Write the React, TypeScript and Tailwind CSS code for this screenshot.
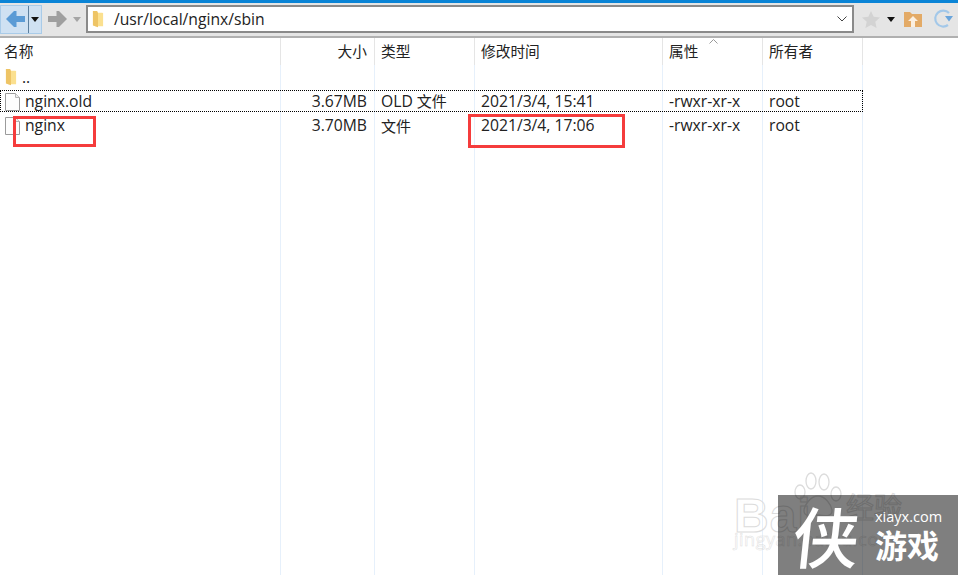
import React from "react";

const font = { fontFamily: '"Open Sans", "Noto Sans CJK SC", sans-serif' };

const tpl = "grid grid-cols-[281px_94px_100px_188px_100px_100px] w-[863px]";

function Folder({ className }: { className?: string }) {
  return (
    <svg viewBox="0 0 14 20" className={className}>
      <path d="M4 2h8a1 1 0 0 1 1 1v15H4z" fill="#fbe08f" />
      <path d="M1 0h5l1 2v17l-6-2z" fill="#eec465" />
    </svg>
  );
}

function FileIcon({ className }: { className?: string }) {
  return (
    <svg viewBox="0 0 15 18" className={className}>
      <path d="M.5.5h10l4 4v13H.5z" fill="#fdfdfd" stroke="#9b9b9b" />
      <path d="M10.5.5v4h4" fill="#eee" stroke="#b5b5b5" />
    </svg>
  );
}

function Arrow({ color, flip }: { color: string; flip?: boolean }) {
  return (
    <svg viewBox="0 0 19 16" className={`w-[19px] h-4 ${flip ? "-scale-x-100" : ""}`}>
      <path d="M0 8 8 0h2.500v5H19v6h-8.500v5H8z" fill={color} />
    </svg>
  );
}

function Caret({ color }: { color: string }) {
  return (
    <svg viewBox="0 0 8 5" className="w-2 h-[5px]">
      <path d="M0 0h8L4 5z" fill={color} />
    </svg>
  );
}

const lineH = "border-r border-[#e5e5e5]";
const lineB = "border-r border-[#e6f0fb]";

function Row({
  cells,
  icon,
  selected,
  className,
}: {
  cells: React.ReactNode[];
  icon?: React.ReactNode;
  selected?: boolean;
  className?: string;
}) {
  const c = `${lineB} flex items-center`;
  return (
    <div className={`${tpl} ${className ?? ""} relative text-[15.700px] text-[#222]`}>
      <div className={`${c} pl-[5px] gap-[5px]`}>
        {icon}
        <span>{cells[0]}</span>
      </div>
      <div className={`${c} justify-end pr-[7px]`}>{cells[1]}</div>
      <div className={`${c} pl-[6px]`}>{cells[2]}</div>
      <div className={`${c} pl-[6px]`}>{cells[3]}</div>
      <div className={`${c} pl-[6px]`}>{cells[4]}</div>
      <div className={`${c} pl-[6px]`}>{cells[5]}</div>
      {selected && <div className="absolute inset-0 border border-dotted border-black" />}
    </div>
  );
}

export default function App() {
  return (
    <div className="w-[958px] h-[575px] bg-white relative overflow-hidden flex flex-col" style={font}>
      <div className="h-[3px] bg-[#0a84d6] shrink-0" />
      <div className="h-[35px] shrink-0 bg-[#e5e5e5] border-b-2 border-[#b0b0b0] flex items-center pb-[1px]">
        <div className="w-[42px] h-[29px] bg-[#cfe1f2] border border-[#a9cbe8] flex items-center">
          <div className="w-[27px] flex justify-center pl-[2px]">
            <Arrow color="#5b9bd5" />
          </div>
          <div className="w-px h-full bg-[#5c7f9d]" />
          <div className="flex-1 flex justify-center">
            <Caret color="#111" />
          </div>
        </div>
        <div className="ml-[6px]">
          <Arrow color="#9f9f9f" flip />
        </div>
        <div className="ml-[6px]">
          <Caret color="#a5a5a5" />
        </div>
        <div className="ml-[5px] w-[768px] h-[28px] bg-white border-2 border-[#8a8a8a] flex items-center pl-[4px] pr-[5px]">
          <Folder className="w-3 h-[17px]" />
          <span className="ml-[10px] pt-[2px] text-[15.700px] text-[#222] flex-1">/usr/local/nginx/sbin</span>
          <svg viewBox="0 0 10 6" className="w-[10px] h-[6px]">
            <path d="M.5.5 5 5 9.500.5" fill="none" stroke="#444" />
          </svg>
        </div>
        <svg viewBox="0 0 18 17" className="ml-[8px] w-[18px] h-[17px]">
          <path d="m9 0 2.700 5.800 6.300.7-4.700 4.300 1.300 6.200L9 14l-5.600 3 1.300-6.200L0 6.500l6.300-.7z" fill="#d3d3d3" />
        </svg>
        <div className="ml-[7px]">
          <Caret color="#111" />
        </div>
        <svg viewBox="0 0 18 16" className="ml-[9px] w-[18px] h-[16px]">
          <path d="M0 1h6l2 2h10v13H0z" fill="#e3aa66" />
          <path d="M9 5l5 5h-3v6H7v-6H4z" fill="#fbefe0" />
        </svg>
        <svg viewBox="0 0 20 20" className="ml-[11px] w-[20px] h-[20px]">
          <path d="M15 16a8 8 0 1 1 1-12" fill="none" stroke="#a3c8e9" strokeWidth="2.200" />
          <path d="M20 7h-8l4 5.500z" fill="#6aa5dc" />
        </svg>
      </div>

      <div className={`${tpl} h-[27px] text-[14.700px] text-[#222] relative shrink-0`}>
        <div className={`${lineH} pl-1 flex items-center`}>名称</div>
        <div className={`${lineH} flex items-center justify-end pr-[7px]`}>大小</div>
        <div className={`${lineH} pl-[6px] flex items-center`}>类型</div>
        <div className={`${lineH} pl-[6px] flex items-center`}>修改时间</div>
        <div className={`${lineH} pl-[6px] flex items-center relative`}>
          属性
          <svg viewBox="0 0 9 5" className="absolute left-[46px] top-[1px] w-[9px] h-[5px]">
            <path d="M.5 4.500 4.500.5l4 4" fill="none" stroke="#999" />
          </svg>
        </div>
        <div className={`${lineH} pl-[6px] flex items-center`}>所有者</div>
      </div>

      <Row
        className="h-[25px] shrink-0"
        cells={["..", "", "", "", "", ""]}
        icon={<Folder className="w-[12px] h-[17px]" />}
      />
      <Row
        className="h-[22px] shrink-0"
        selected
        cells={[
          "nginx.old",
          "3.67MB",
          <span>
            OLD <span className="text-[15px]">文件</span>
          </span>,
          "2021/3/4, 15:41",
          "-rwxr-xr-x",
          "root",
        ]}
        icon={<FileIcon className="w-[15px] h-[18px]" />}
      />
      <Row
        className="h-[28px] shrink-0"
        cells={[
          "nginx",
          "3.70MB",
          <span className="text-[15px]">文件</span>,
          "2021/3/4, 17:06",
          "-rwxr-xr-x",
          "root",
        ]}
        icon={<FileIcon className="w-[15px] h-[18px]" />}
      />
      <Row className="flex-1" cells={["", "", "", "", "", ""]} />

      <div className="absolute left-[13px] top-[116px] w-[83px] h-[31px] border-[3px] border-[#f53c3c]" />
      <div className="absolute left-[468px] top-[114px] w-[157px] h-[34px] border-[3px] border-[#f53c3c]" />

      <div
        className="absolute left-[734px] top-[492px] text-[48px] leading-none font-bold tracking-[1px] text-transparent [-webkit-text-stroke:1px_#dcdcdc]"
        style={{ fontFamily: '"Liberation Sans", sans-serif' }}
      >
        Bai
      </div>
      <svg viewBox="0 0 50 46" className="absolute left-[793px] top-[472px] w-[50px] h-[46px]">
        <g fill="none" stroke="#dcdcdc" strokeWidth="1.300">
          <ellipse cx="7" cy="20" rx="5" ry="7" />
          <ellipse cx="18" cy="9" rx="5" ry="8" />
          <ellipse cx="31" cy="10" rx="5" ry="8" />
          <ellipse cx="43" cy="22" rx="5" ry="7" />
          <path d="M25 24c-7 0-14 9-14 15 0 6 8 5 14 4 6 1 14 2 14-4 0-6-7-15-14-15z" />
        </g>
      </svg>
      <div className="absolute left-[846px] top-[493px] text-[28px] leading-none text-transparent [-webkit-text-stroke:1px_#dcdcdc]">
        经验
      </div>
      <div className="absolute left-[734px] top-[530px] text-[18px] leading-none tracking-[0.5px] text-transparent [-webkit-text-stroke:0.5px_#dedede]">
        jingyan.baidu.com
      </div>

      <div className="absolute left-[778px] top-[495px] w-[180px] h-[80px] bg-black/50 flex items-center text-white">
        <div
          className="w-[97px] text-center text-[66px] leading-none font-medium -skew-x-6 -mt-[2px]"
          style={{ fontFamily: '"Noto Sans CJK SC", sans-serif' }}
        >
          侠
        </div>
        <div className="flex flex-col items-start -mt-[2px]">
          <span className="text-[14.500px] leading-[20px]">xiayx.com</span>
          <span
            className="text-[32px] leading-[34px] font-bold"
            style={{ fontFamily: '"Noto Sans CJK SC", sans-serif' }}
          >
            游戏
          </span>
        </div>
      </div>
    </div>
  );
}
